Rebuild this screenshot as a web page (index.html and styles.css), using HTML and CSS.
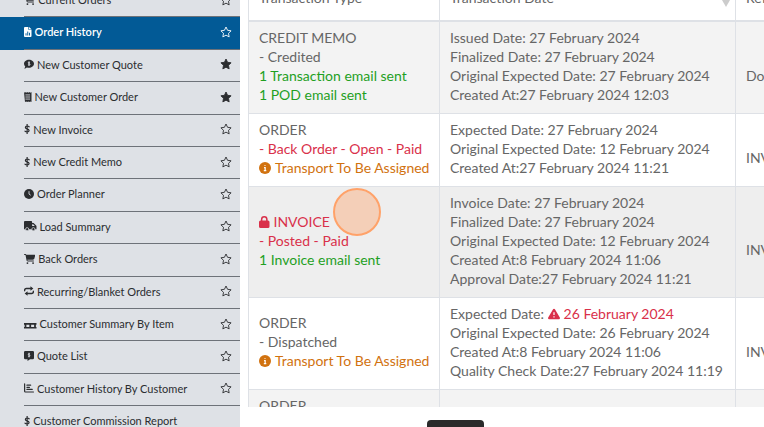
FILE: index.html
```html
<!DOCTYPE html>
<html lang="en">
<head>
    <meta charset="UTF-8">
    <meta name="viewport" content="width=device-width, initial-scale=1.0">
    <title>Order History</title>
    <link rel="stylesheet" href="styles.css">
</head>
<body>
    <svg class="sprite" aria-hidden="true">
        <symbol id="star" viewBox="0 0 24 24"><path d="M12 2l3.1 6.6 7.1 1-5.2 5 1.300 7.200L12 18.300l-6.300 3.500L7 14.600l-5.200-5 7.100-1z" stroke-width="1.800" stroke-linejoin="round" stroke="currentColor"/></symbol>
        <symbol id="cart" viewBox="0 0 576 512"><path d="M0 24C0 11 11 0 24 0h46c22 0 42 13 51 32h411c26 0 46 25 39 51l-41 152c-9 31-37 53-69 53H171l5 28c2 12 12 20 24 20h288c13 0 24 11 24 24s-11 24-24 24H200c-35 0-65-25-71-59L77 54c-1-4-4-6-7-6H24C11 48 0 37 0 24z"/><circle cx="176" cy="464" r="48"/><circle cx="464" cy="464" r="48"/></symbol>
        <symbol id="dollar" viewBox="0 0 320 512"><path d="M160 8v496M262 142c-25-25-60-39-101-39-53 0-91 27-91 70 0 100 190 60 190 160 0 47-42 77-98 77-45 0-87-17-112-44" fill="none" stroke="currentColor" stroke-width="62" stroke-linecap="round"/></symbol>
    </svg>
    <div class="page">
        <nav class="sidebar">
            <ul class="menu">
                <li class="menu-item">
                    <a href="#"><svg class="icon" viewBox="0 0 576 512"><use href="#cart"/></svg>Current Orders</a>
                    <button class="fav" aria-label="Favourite"><svg><use href="#star"/></svg></button>
                </li>
                <li class="menu-item active">
                    <a href="#"><svg class="icon" viewBox="0 0 384 512"><path fill-rule="evenodd" d="M48 0h176v144h160v320q0 48-48 48H48q-48 0-48-48V48Q0 0 48 0zM256 0l128 112H256zM80 320v120h48V320zM168 230v210h48V230zM256 290v150h48V290z"/></svg>Order History</a>
                    <button class="fav" aria-label="Favourite"><svg><use href="#star"/></svg></button>
                </li>
                <li class="menu-item">
                    <a href="#"><svg class="icon" viewBox="0 0 512 512"><path d="M256 32c141 0 256 93 256 208S397 448 256 448c-38 0-74-7-106-19-30 22-78 51-140 51 30-32 50-67 54-98C24 344 0 294 0 240 0 125 115 32 256 32z"/><path class="cut" d="M256 120v240M306 182c-70-40-110 10-80 36 30 24 90 20 84 62-8 34-60 32-108 8"/></svg>New Customer Quote</a>
                    <button class="fav on" aria-label="Favourite"><svg><use href="#star"/></svg></button>
                </li>
                <li class="menu-item">
                    <a href="#"><svg class="icon" viewBox="0 0 384 512"><path d="M0 0l48 32L96 0l48 32 48-32 48 32 48-32 48 32 48-32v512l-48-32-48 32-48-32-48 32-48-32-48 32-48-32z"/><path class="cut" d="M72 150h240M72 256h240M72 362h240"/></svg>New Customer Order</a>
                    <button class="fav on" aria-label="Favourite"><svg><use href="#star"/></svg></button>
                </li>
                <li class="menu-item">
                    <a href="#"><svg class="icon" viewBox="0 0 320 512"><use href="#dollar"/></svg>New Invoice</a>
                    <button class="fav" aria-label="Favourite"><svg><use href="#star"/></svg></button>
                </li>
                <li class="menu-item">
                    <a href="#"><svg class="icon" viewBox="0 0 320 512"><use href="#dollar"/></svg>New Credit Memo</a>
                    <button class="fav" aria-label="Favourite"><svg><use href="#star"/></svg></button>
                </li>
                <li class="menu-item">
                    <a href="#"><svg class="icon" viewBox="0 0 512 512"><circle cx="256" cy="256" r="256"/><path class="cut" d="M256 110v150l90 60"/></svg>Order Planner</a>
                    <button class="fav" aria-label="Favourite"><svg><use href="#star"/></svg></button>
                </li>
                <li class="menu-item">
                    <a href="#"><svg class="icon" viewBox="0 0 640 512"><path fill-rule="evenodd" d="M48 0h320q48 0 48 48v48h75l117 117q32 20 32 60v143H0V48Q0 0 48 0zM416 160v96h128v-18l-78-78z"/><circle class="wheel" cx="160" cy="416" r="80"/><circle class="wheel" cx="480" cy="416" r="80"/></svg>Load Summary</a>
                    <button class="fav" aria-label="Favourite"><svg><use href="#star"/></svg></button>
                </li>
                <li class="menu-item">
                    <a href="#"><svg class="icon" viewBox="0 0 576 512"><use href="#cart"/></svg>Back Orders</a>
                    <button class="fav" aria-label="Favourite"><svg><use href="#star"/></svg></button>
                </li>
                <li class="menu-item">
                    <a href="#"><svg class="icon" viewBox="0 0 512 512"><path d="M32 240v-24q0-88 88-88h232M480 272v24q0 88-88 88H160" fill="none" stroke="currentColor" stroke-width="72" stroke-linecap="round"/><path d="M330 8l150 120-150 120zM182 264L32 384l150 120z"/></svg>Recurring/Blanket Orders</a>
                    <button class="fav" aria-label="Favourite"><svg><use href="#star"/></svg></button>
                </li>
                <li class="menu-item">
                    <a href="#"><svg class="icon" viewBox="0 0 640 512"><path d="M0 210h640v90H0zM0 410h640v80H0zM32 290h90v140H32zM275 290h90v140h-90zM518 290h90v140h-90z"/></svg>Customer Summary By Item</a>
                    <button class="fav" aria-label="Favourite"><svg><use href="#star"/></svg></button>
                </li>
                <li class="menu-item">
                    <a href="#"><svg class="icon" viewBox="0 0 512 512"><path d="M64 0h384q64 0 64 64v288q0 64-64 64H310L180 512v-96H64q-64 0-64-64V64Q0 0 64 0z"/><path class="cut" d="M256 90v240M306 152c-70-40-110 10-80 36 30 24 90 20 84 62-8 34-60 32-108 8"/></svg>Quote List</a>
                    <button class="fav" aria-label="Favourite"><svg><use href="#star"/></svg></button>
                </li>
                <li class="menu-item">
                    <a href="#"><svg class="icon" viewBox="0 0 512 512"><path d="M32 50v370q0 40 40 40h410M150 110h190M150 220h130M150 330h270" fill="none" stroke="currentColor" stroke-width="62" stroke-linecap="round"/></svg>Customer History By Customer</a>
                    <button class="fav" aria-label="Favourite"><svg><use href="#star"/></svg></button>
                </li>
                <li class="menu-item">
                    <a href="#"><svg class="icon" viewBox="0 0 320 512"><use href="#dollar"/></svg>Customer Commission Report</a>
                </li>
            </ul>
        </nav>

        <main class="content">
            <div class="table-wrap">
                <table class="orders">
                    <thead>
                        <tr>
                            <th class="col-type">Transaction Type</th>
                            <th class="col-date"><div class="sortable">Transaction Date <span class="sort"></span></div></th>
                            <th>Reference</th>
                        </tr>
                    </thead>
                    <tbody>
                        <tr class="odd">
                            <td>CREDIT MEMO<br>- Credited<br><span class="green">1 Transaction email sent<br>1 POD email sent</span></td>
                            <td>Issued Date: 27 February 2024<br>Finalized Date: 27 February 2024<br>Original Expected Date: 27 February 2024<br>Created At:27 February 2024 12:03</td>
                            <td><br>Doc</td>
                        </tr>
                        <tr>
                            <td>ORDER<br><span class="red">- Back Order - Open - Paid</span><br><span class="orange"><svg class="mark" viewBox="0 0 512 512"><circle cx="256" cy="256" r="256"/><path class="mark-cut" d="M215 236h48v130M205 372h106M256 130v30"/></svg>Transport To Be Assigned</span></td>
                            <td>Expected Date: 27 February 2024<br>Original Expected Date: 12 February 2024<br>Created At:27 February 2024 11:21</td>
                            <td><br>INV</td>
                        </tr>
                        <tr class="current">
                            <td><span class="red"><svg class="mark" viewBox="0 0 448 512"><path fill-rule="evenodd" d="M80 192v-48a144 144 0 0 1 288 0v48h16q64 0 64 64v192q0 64-64 64H64q-64 0-64-64V256q0-64 64-64zM144 192h160v-48a80 80 0 0 0-160 0z"/></svg>INVOICE<br>- Posted - Paid</span><br><span class="green">1 Invoice email sent</span><span class="pointer"></span></td>
                            <td>Invoice Date: 27 February 2024<br>Finalized Date: 27 February 2024<br>Original Expected Date: 12 February 2024<br>Created At:8 February 2024 11:06<br>Approval Date:27 February 2024 11:21</td>
                            <td><br>INV</td>
                        </tr>
                        <tr>
                            <td>ORDER<br>- Dispatched<br><span class="orange"><svg class="mark" viewBox="0 0 512 512"><circle cx="256" cy="256" r="256"/><path class="mark-cut" d="M215 236h48v130M205 372h106M256 130v30"/></svg>Transport To Be Assigned</span></td>
                            <td>Expected Date: <span class="red"><svg class="mark" viewBox="0 0 512 512"><path d="M256 32q26 0 40 24l208 352q20 56-40 72H48q-60-16-40-72L216 56q14-24 40-24z"/><path class="mark-cut" d="M256 176v120M256 350v54"/></svg>26 February 2024</span><br>Original Expected Date: 26 February 2024<br>Created At:8 February 2024 11:06<br>Quality Check Date:27 February 2024 11:19</td>
                            <td><br>INV</td>
                        </tr>
                        <tr class="odd">
                            <td>ORDER<br>- Dispatched</td>
                            <td></td>
                            <td></td>
                        </tr>
                    </tbody>
                </table>
            </div>
            <div class="footer">
                <button class="dark-btn" aria-label="Page"></button>
            </div>
        </main>
    </div>
</body>
</html>
```
FILE: styles.css
```css
* {
    box-sizing: border-box;
}
body {
    margin: 0;
    font-family: Lato, 'Open Sans', sans-serif;
    background: #fff;
    color: #666;
}
.sprite {
    position: absolute;
    width: 0;
    height: 0;
}
.page {
    display: flex;
    height: 100vh;
    overflow: hidden;
}
.sidebar {
    flex: 0 0 240px;
    background: #dee1e6;
    overflow: hidden;
}
.menu {
    list-style: none;
    margin: -15px 0 0;
    padding: 0;
}
.menu-item {
    display: flex;
    justify-content: space-between;
    padding-left: 24px;
    font-size: 11px;
    line-height: 1.4;
    color: #2b2d30;
    background: linear-gradient(#6d7279, #6d7279) right bottom / calc(100% - 24px) 1px no-repeat;
    padding-bottom: 1px;
}
.menu-item.active {
    background-color: #025a96;
    color: #fff;
    font-weight: 600;
}
.menu-item a {
    display: flex;
    align-items: center;
    gap: 3px;
    padding: 7px 0 9px;
    color: inherit;
    text-decoration: none;
    white-space: nowrap;
}
.icon {
    height: 10px;
    fill: currentColor;
}
.cut {
    fill: none;
    stroke: #dee1e6;
    stroke-width: 44;
}
.wheel {
    stroke: #dee1e6;
    stroke-width: 36;
}
.fav {
    display: flex;
    align-items: center;
    padding: 0 8px 2px;
    border: 0;
    background: none;
    color: inherit;
    cursor: pointer;
}
.fav svg {
    width: 12px;
    height: 12px;
    fill: none;
}
.fav.on svg {
    fill: currentColor;
}
.content {
    flex: 1;
    min-width: 0;
    display: flex;
    flex-direction: column;
    padding-left: 8px;
}
.table-wrap {
    flex: 1;
    min-height: 0;
    overflow: hidden;
}
.orders {
    width: 600px;
    margin-top: -21px;
    border-collapse: collapse;
    table-layout: fixed;
    font-size: 14px;
    line-height: 19px;
}
.orders th {
    height: 41px;
    padding: 8px 5px 12px 10px;
    border: 1px solid #dee1e6;
    border-bottom-width: 2px;
    font-weight: 400;
    text-align: left;
}
.col-type {
    width: 191px;
}
.col-date {
    width: 296px;
}
.sortable {
    display: flex;
    justify-content: space-between;
    align-items: flex-end;
}
.sort {
    border: 4px solid transparent;
    border-top: 7px solid #ccc;
    border-bottom: 0;
}
.orders td {
    position: relative;
    padding: 6px 0 9px 10px;
    border: 1px solid #dee1e6;
    white-space: nowrap;
}
.odd {
    background: #f3f3f3;
}
.current {
    background: #eee;
}
.green {
    color: #1fa01f;
}
.red {
    color: #d9304a;
}
.orange {
    color: #d1720f;
}
.mark {
    height: 12px;
    margin-right: 4px;
    vertical-align: -1px;
    fill: currentColor;
}
.mark-cut {
    fill: none;
    stroke: #fff;
    stroke-width: 52;
}
/* click highlight over the invoice row */
.pointer {
    position: absolute;
    top: 1px;
    left: 84px;
    width: 48px;
    height: 48px;
    border: 2px solid #ffa269;
    border-radius: 50%;
    background: rgba(250, 176, 130, 0.5);
}
.footer {
    display: flex;
    height: 20px;
    padding: 13px 0 0 179px;
    overflow: hidden;
}
.dark-btn {
    flex: none;
    width: 57px;
    height: 30px;
    border: 0;
    border-radius: 4px;
    background: #2a2a2a;
}
```
